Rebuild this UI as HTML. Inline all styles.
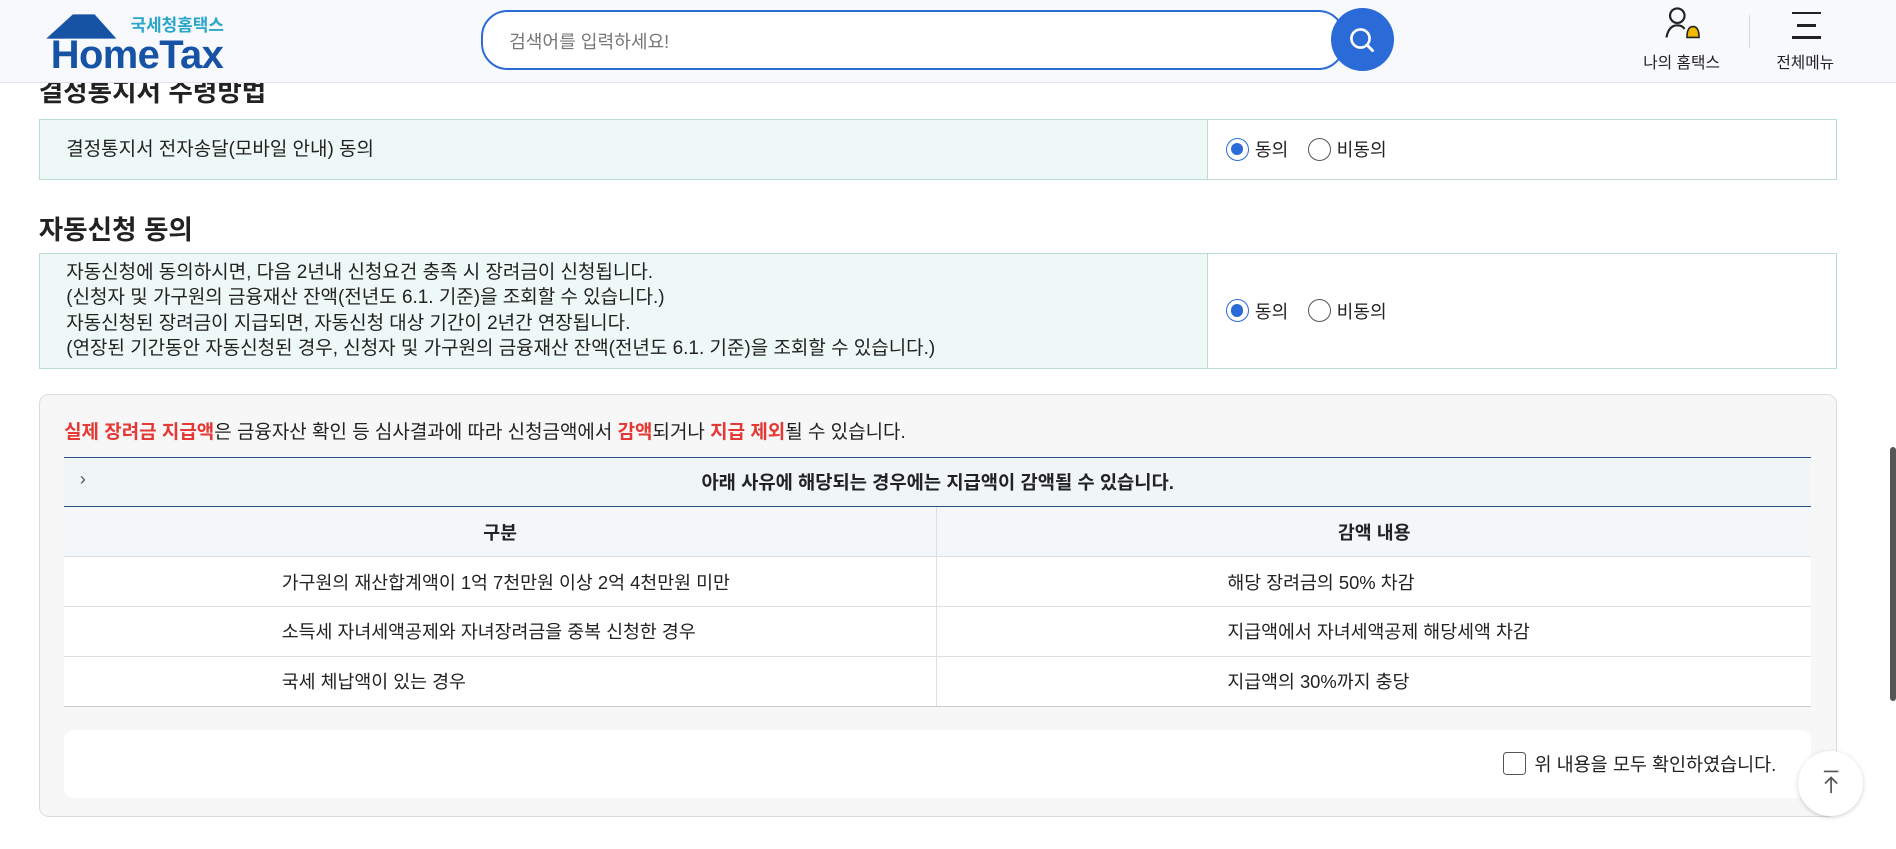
<!DOCTYPE html>
<html><head><meta charset="utf-8"><style>
html,body{margin:0;padding:0;overflow:hidden}
body{width:1568px;height:702px;zoom:1.2092;position:relative;background:#fff;font-family:"Liberation Sans","Noto Sans CJK KR",sans-serif;color:#222}
.abs{position:absolute}
.hdr{left:0;top:0;width:1568px;height:68px;background:#f7f9fd;border-bottom:1px solid #dfe3ea;z-index:2}
.h2{font-size:22px;font-weight:bold;color:#222}
.tbl{left:32px;width:1487px;border:1px solid #b9dcd6;display:flex;box-sizing:border-box}
.tbl .l{width:966px;background:#eef8f6;border-right:1px solid #b9dcd6;box-sizing:border-box;padding-left:22px;font-size:15.7px;display:flex;flex-direction:column;justify-content:center;line-height:21px}
.tbl .r{flex:1;display:flex;align-items:center;padding-left:15px;font-size:15px}
.rad{width:19px;height:19px;border:1px solid #555;border-radius:50%;box-sizing:border-box;display:inline-block;margin-right:5px;position:relative;vertical-align:middle}
.rad.on{border-color:#2a6bd8}
.rad.on:after{content:"";position:absolute;left:3.5px;top:3.5px;width:10px;height:10px;border-radius:50%;background:#2a6bd8}
.red{color:#e53935;font-weight:bold}
.row{left:53px;width:1445px;display:flex;border-bottom:1px solid #dcdfe3;font-size:15.2px;box-sizing:border-box}
.row div{display:flex;align-items:center}
.row .a{width:722px;border-right:1px solid #dcdfe3;padding-left:180px;box-sizing:border-box}
.row .b{padding-left:240px}
</style></head><body>
<div class="abs hdr">
  <svg class="abs" style="left:32px;top:10px" width="80" height="30" viewBox="0 0 80 30"><path d="M6 22 L28 2 L46 2 L64 22 Z" fill="#1653a5"/><rect x="10" y="18" width="10" height="4" fill="#1653a5"/></svg>
  <div class="abs" style="left:108px;top:9px;font-size:14px;color:#2aa6c9;font-weight:bold">국세청홈택스</div>
  <div class="abs" style="left:42px;top:27px;font-size:33px;font-weight:bold;color:#1653a5;letter-spacing:-0.5px">HomeTax</div>
  <div class="abs" style="left:398px;top:8px;width:714px;height:50px;border:2px solid #2a6bd8;border-radius:22px;box-sizing:border-box;background:#fff"></div>
  <div class="abs" style="left:421px;top:23px;font-size:15px;color:#777">검색어를 입력하세요!</div>
  <div class="abs" style="left:1101px;top:7px;width:52px;height:52px;border-radius:50%;background:#2a6bd8"></div>
  <svg class="abs" style="left:1113px;top:20px" width="28" height="28" viewBox="0 0 28 28"><circle cx="12" cy="12" r="7.5" fill="none" stroke="#fff" stroke-width="2.2"/><path d="M17.5 17.5 L22 22" stroke="#fff" stroke-width="2.4" stroke-linecap="round"/></svg>
  <svg class="abs" style="left:1376px;top:5px" width="34" height="30" viewBox="0 0 34 30"><circle cx="11" cy="8" r="6" fill="none" stroke="#222" stroke-width="1.8"/><path d="M2 26 Q4 16 11 16 Q15 16 17 19" fill="none" stroke="#222" stroke-width="1.8"/><path d="M19 26 Q19 17 24 17 Q29 17 29 26 Z" fill="#f5b800" stroke="#222" stroke-width="1.3"/></svg>
  <div class="abs" style="left:1359px;top:41px;font-size:13px">나의 홈택스</div>
  <div class="abs" style="left:1446px;top:12px;width:1px;height:28px;background:#d5d8dd"></div>
  <div class="abs" style="left:1482px;top:10px;width:24px;height:2px;background:#222"></div>
  <div class="abs" style="left:1486px;top:20px;width:16px;height:2px;background:#222"></div>
  <div class="abs" style="left:1482px;top:30px;width:24px;height:2px;background:#222"></div>
  <div class="abs" style="left:1469px;top:41px;font-size:13px">전체메뉴</div>
</div>
<div class="abs h2" style="left:32px;top:58px">결정통지서 수령방법</div>
<div class="abs tbl" style="top:98px;height:51px"><div class="l">결정통지서 전자송달(모바일 안내) 동의</div><div class="r"><span class="rad on"></span>동의 <span class="rad" style="margin-left:16px"></span>비동의</div></div>
<div class="abs h2" style="left:32px;top:172px">자동신청 동의</div>
<div class="abs tbl" style="top:209px;height:96px"><div class="l">자동신청에 동의하시면, 다음 2년내 신청요건 충족 시 장려금이 신청됩니다.<br>(신청자 및 가구원의 금융재산 잔액(전년도 6.1. 기준)을 조회할 수 있습니다.)<br>자동신청된 장려금이 지급되면, 자동신청 대상 기간이 2년간 연장됩니다.<br>(연장된 기간동안 자동신청된 경우, 신청자 및 가구원의 금융재산 잔액(전년도 6.1. 기준)을 조회할 수 있습니다.)</div><div class="r"><span class="rad on"></span>동의 <span class="rad" style="margin-left:16px"></span>비동의</div></div>
<div class="abs" style="left:32px;top:326px;width:1487px;height:350px;background:#f7f7f7;border:1px solid #dcdcdc;border-radius:8px;box-sizing:border-box"></div>
<div class="abs" style="left:53px;top:345px;font-size:15.7px"><span class="red">실제 장려금 지급액</span>은 금융자산 확인 등 심사결과에 따라 신청금액에서 <span class="red">감액</span>되거나 <span class="red">지급 제외</span>될 수 있습니다.</div>
<div class="abs" style="left:53px;top:378px;width:1445px;height:41px;background:#f0f6f8;border-top:1px solid #2b4f80;border-bottom:1px solid #2b4f80;box-sizing:border-box;display:flex;align-items:center;justify-content:center;font-size:15.5px;font-weight:bold">아래 사유에 해당되는 경우에는 지급액이 감액될 수 있습니다.</div>
<div class="abs" style="left:66px;top:388px;font-size:15px;color:#555">›</div>
<div class="abs row" style="top:419px;height:42px;background:#f4f7f9;font-weight:bold"><div class="a" style="padding-left:0;justify-content:center">구분</div><div style="flex:1;justify-content:center">감액 내용</div></div>
<div class="abs row" style="top:461px;height:41px;background:#fff"><div class="a">가구원의 재산합계액이 1억 7천만원 이상 2억 4천만원 미만</div><div class="b">해당 장려금의 50% 차감</div></div>
<div class="abs row" style="top:502px;height:41px;background:#fff"><div class="a">소득세 자녀세액공제와 자녀장려금을 중복 신청한 경우</div><div class="b">지급액에서 자녀세액공제 해당세액 차감</div></div>
<div class="abs row" style="top:543px;height:42px;background:#fff;border-bottom-color:#c8ccd1"><div class="a">국세 체납액이 있는 경우</div><div class="b">지급액의 30%까지 충당</div></div>
<div class="abs" style="left:53px;top:604px;width:1445px;height:56px;background:#fff;border-radius:8px"></div>
<div class="abs" style="left:1243px;top:622px;width:19px;height:19px;border:1px solid #555;border-radius:3px;box-sizing:border-box;background:#fff"></div>
<div class="abs" style="left:1269px;top:621px;font-size:15.3px">위 내용을 모두 확인하였습니다.</div>
<div class="abs" style="left:1487px;top:621px;width:54px;height:54px;border-radius:50%;background:#fff;box-shadow:0 1px 4px rgba(0,0,0,.18)"></div>
<svg class="abs" style="left:1504px;top:636px" width="20" height="24" viewBox="0 0 20 24"><path d="M4 2 H16 M10 20 V7 M5 12 L10 7 L15 12" fill="none" stroke="#555" stroke-width="1.4"/></svg>
<div class="abs" style="left:1563px;top:370px;width:5px;height:210px;background:#555;border-radius:3px"></div>
</body></html>
